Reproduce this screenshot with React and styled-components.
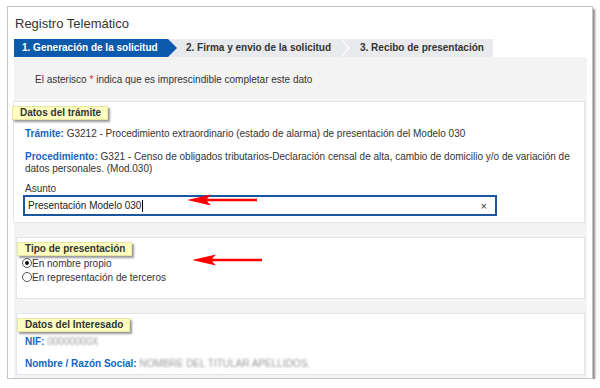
import React from 'react'
import styled, { createGlobalStyle } from 'styled-components'

const GlobalStyle = createGlobalStyle`
  body {
    margin: 0;
    background: #ffffff;
    font-family: 'Liberation Sans', Arial, sans-serif;
  }
`

const STEPS = [
  '1. Generación de la solicitud',
  '2. Firma y envio de la solicitud',
  '3. Recibo de presentación',
]

export default function App() {
  return (
    <>
      <GlobalStyle />
      <Card>
        <Title>Registro Telemático</Title>
        <Steps>
          {STEPS.map((label, i) => (
            <Step key={label} index={i} active={i === 0}>
              {label}
            </Step>
          ))}
        </Steps>
        <Panel>
          <Notice>
            El asterisco <Star>*</Star> indica que es imprescindible completar este dato
          </Notice>

          <Box offset={-1} height={122}>
            <Legend shift={13}>Datos del trámite</Legend>
            <Field>
              <Label>Trámite:</Label> G3212 - Procedimiento extraordinario (estado de alarma) de
              presentación del Modelo 030
            </Field>
            <Field>
              <Label>Procedimiento:</Label> G321 - Censo de obligados tributarios-Declaración
              censal de alta, cambio de domicilio y/o de variación de datos personales. (Mod.030)
            </Field>
            <InputLabel>Asunto</InputLabel>
            <InputBox>
              <InputText>
                Presentación Modelo 030<Caret />
              </InputText>
              <Clear>×</Clear>
            </InputBox>
            <Arrow style={{ left: 173, top: 91 }} />
          </Box>

          <Box offset={2} height={62}>
            <Legend shift={8}>Tipo de presentación</Legend>
            <RadioRow>
              <Radio checked />
              En nombre propio
            </RadioRow>
            <RadioRow>
              <Radio />
              En representación de terceros
            </RadioRow>
            <Arrow style={{ left: 175, top: 15 }} />
          </Box>

          <Box offset={2} height={62}>
            <Legend shift={8}>Datos del Interesado</Legend>
            <DataRow>
              <Label>NIF:</Label> <Blurred>00000000X</Blurred>
            </DataRow>
            <DataRow>
              <Label>Nombre / Razón Social:</Label>{' '}
              <Blurred>NOMBRE DEL TITULAR APELLIDOS.</Blurred>
            </DataRow>
          </Box>
        </Panel>
      </Card>
    </>
  )
}

function Arrow({ style }) {
  return (
    <ArrowSvg style={style} width="72" height="14" viewBox="0 0 72 14">
      <path d="M0 7 L24 1.5 L20 5.8 L70 5.8 L70 8.2 L20 8.2 L24 12.5 Z" fill="#ff0000" />
    </ArrowSvg>
  )
}

const Card = styled.div`
  box-sizing: border-box;
  margin: 6px 0 0 7px;
  width: 586px;
  height: 373px;
  border: 1px solid #c4c4c4;
  box-shadow: 2px 3px 2px #8a8a8a;
  padding: 8px 6px 0 6px;
  overflow: hidden;
  background: #fff;
`

const Title = styled.div`
  font-size: 13px;
  color: #333;
  padding-left: 1px;
  height: 24px;
  line-height: 18px;
`

const Steps = styled.div`
  display: flex;
  height: 18px;
`

const Step = styled.div`
  position: relative;
  z-index: ${(p) => 3 - p.index};
  box-sizing: border-box;
  height: 18px;
  line-height: 18px;
  font-size: 10px;
  font-weight: bold;
  white-space: nowrap;
  color: ${(p) => (p.active ? '#ffffff' : '#333333')};
  background: ${(p) => (p.active ? '#0b5aab' : '#e9eaed')};
  ${(p) =>
    p.index === 0 &&
    `
    width: 163px;
    padding-left: 8px;
    clip-path: polygon(0 0, 154px 0, 100% 50%, 154px 100%, 0 100%);
  `}
  ${(p) =>
    p.index === 1 &&
    `
    width: 180px;
    margin-left: -9px;
    padding-left: 18px;
    clip-path: polygon(0 0, 173px 0, 100% 50%, 173px 100%, 0 100%);
  `}
  ${(p) =>
    p.index === 2 &&
    `
    width: 151px;
    margin-left: -6px;
    padding-left: 18px;
    clip-path: polygon(0 0, 100% 0, 100% 100%, 0 100%, 8px 50%);
  `}
`

const Panel = styled.div`
  background: #f3f3f3;
  width: 573px;
  border-top-right-radius: 3px;
  padding: 17px 2px 14px 0;
  box-sizing: border-box;
  height: 330px;
`

const Notice = styled.div`
  font-size: 10px;
  color: #333;
  padding-left: 21px;
  line-height: 12px;
  margin-bottom: 15px;
`

const Star = styled.span`
  color: #e21b1b;
`

const Box = styled.div`
  position: relative;
  box-sizing: border-box;
  margin-left: ${(p) => p.offset}px;
  margin-bottom: 14px;
  height: ${(p) => p.height}px;
  background: #fff;
  border: 1px solid #e1e6ee;
  padding: 0 10px 0 ${(p) => 10 - p.offset}px;
`

const Legend = styled.div`
  display: inline-block;
  margin: 1px 0 0 -${(p) => p.shift}px;
  padding: 0 6px 0 7px;
  height: 12px;
  line-height: 12px;
  font-size: 10px;
  font-weight: bold;
  color: #333;
  background: #ffffc2;
  border: 1px solid #e6e6a0;
  box-shadow: 2px 2px 2px #9a9a9a;
`

const Field = styled.div`
  font-size: 10px;
  line-height: 12px;
  color: #333;
  margin-top: 8px;
  & + & {
    margin-top: 11px;
  }
`

const Label = styled.span`
  color: #1565c0;
  font-weight: bold;
`

const InputLabel = styled.div`
  font-size: 10px;
  color: #333;
  margin-top: 8px;
  line-height: 12px;
`

const InputBox = styled.div`
  display: flex;
  align-items: center;
  justify-content: space-between;
  box-sizing: border-box;
  margin-left: -2px;
  width: 474px;
  height: 21px;
  border: 2px solid #1a56a0;
  padding: 0 8px 0 3px;
  background: #fff;
`

const InputText = styled.span`
  font-size: 10px;
  color: #222;
  display: flex;
  align-items: center;
`

const Caret = styled.span`
  display: inline-block;
  width: 1px;
  height: 12px;
  background: #000;
  margin-left: 1px;
`

const Clear = styled.span`
  font-size: 11px;
  color: #333;
`

const ArrowSvg = styled.svg`
  position: absolute;
`

const RadioRow = styled.div`
  display: flex;
  align-items: center;
  font-size: 10px;
  color: #333;
  height: 14px;
  margin-left: -3px;
  &:first-of-type {
    margin-top: 2px;
  }
`

const Radio = styled.span`
  box-sizing: border-box;
  width: 10px;
  height: 10px;
  border-radius: 50%;
  border: 1px solid #555;
  background: #fff;
  position: relative;
  ${(p) =>
    p.checked &&
    `
    &::after {
      content: '';
      position: absolute;
      left: 2px;
      top: 2px;
      width: 4px;
      height: 4px;
      border-radius: 50%;
      background: #111;
    }
  `}
`

const DataRow = styled.div`
  font-size: 10px;
  color: #333;
  line-height: 12px;
  margin-top: 4px;
  & + & {
    margin-top: 10px;
  }
`

const Blurred = styled.span`
  color: #999;
  filter: blur(1.2px);
`
